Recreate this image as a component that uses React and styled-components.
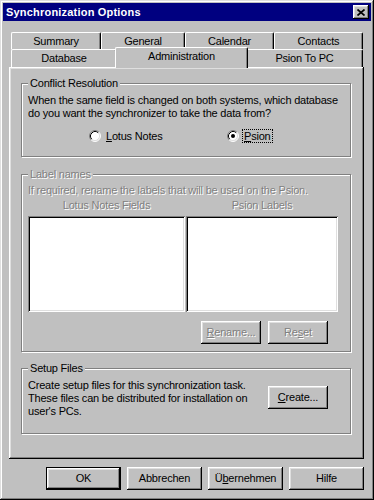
import React from 'react'
import styled, { createGlobalStyle } from 'styled-components'

const GlobalStyle = createGlobalStyle`
  html, body {
    margin: 0;
    padding: 0;
    background: #c0c0c0;
  }
  body {
    font-family: "Liberation Sans", Arial, sans-serif;
    font-size: 11px;
  }
`

const bevel = `
  box-shadow: inset -1px -1px 0 #000, inset 1px 1px 0 #fff,
    inset -2px -2px 0 #808080, inset 2px 2px 0 #dfdfdf;
`

const Window = styled.div`
  box-sizing: border-box;
  width: 374px;
  height: 500px;
  padding: 3px;
  background: #c0c0c0;
  box-shadow: inset -1px -1px 0 #000, inset 1px 1px 0 #dfdfdf,
    inset -2px -2px 0 #808080, inset 2px 2px 0 #fff;
  display: flex;
  flex-direction: column;
  font-family: "Liberation Sans", Arial, sans-serif;
  font-size: 11px;
  line-height: 13px;
  letter-spacing: -0.2px;
  color: #000;
`

const TitleBar = styled.div`
  height: 18px;
  flex: none;
  background: #000080;
  color: #fff;
  font-weight: bold;
  letter-spacing: 0.2px;
  display: flex;
  align-items: center;
  justify-content: space-between;
  padding: 0 2px 0 3px;
`

const CloseButton = styled.button`
  width: 16px;
  height: 14px;
  padding: 0;
  border: 0;
  background: #c0c0c0;
  ${bevel}
  display: flex;
  align-items: center;
  justify-content: center;
`

const Body = styled.div`
  flex: 1;
  display: flex;
  flex-direction: column;
  padding: 11px 7px 7px 6px;
`

const TabStrip = styled.div`
  display: flex;
  flex-direction: column;
  padding: 0 1px 0 2px;
  position: relative;
  z-index: 1;
`

const TabRow = styled.div`
  display: flex;
  height: ${p => p.$height}px;
`

const Tab = styled.div`
  box-sizing: border-box;
  flex: none;
  width: ${p => p.$width}px;
  height: ${p => (p.$active ? p.$height + 3 : p.$height)}px;
  margin: ${p => (p.$active ? '-2px -2px 0' : '0')};
  padding-bottom: ${p => (p.$active ? 3 : 0)}px;
  position: relative;
  z-index: ${p => (p.$active ? 2 : 1)};
  background: #c0c0c0;
  border-top: 1px solid #fff;
  border-left: 1px solid #fff;
  border-right: 1px solid #000;
  border-radius: 2px 2px 0 0;
  box-shadow: inset -1px 0 0 #808080;
  display: flex;
  align-items: center;
  justify-content: center;
`

const Panel = styled.div`
  box-sizing: border-box;
  flex: 1;
  display: flex;
  flex-direction: column;
  padding: 10px 13px 0 12px;
  box-shadow: inset -1px -1px 0 #000, inset 1px 1px 0 #fff,
    inset -2px -2px 0 #808080, inset 2px 2px 0 #dfdfdf;
`

const Group = styled.fieldset`
  margin: ${p => p.$top || 0}px 0 0;
  padding: ${p => p.$padTop}px 6px ${p => p.$padBottom}px;
  border: 1px solid #808080;
  box-shadow: inset 1px 1px 0 #fff, 1px 1px 0 #fff;
  min-width: 0;
`

const Legend = styled.legend`
  padding: 0 2px;
  line-height: 13px;
  background: #c0c0c0;
  color: ${p => (p.$disabled ? '#808080' : '#000')};
  text-shadow: ${p => (p.$disabled ? '1px 1px 0 #fff' : 'none')};
`

const Text = styled.div`
  line-height: 13px;
  white-space: nowrap;
  color: ${p => (p.$disabled ? '#808080' : '#000')};
  text-shadow: ${p => (p.$disabled ? '1px 1px 0 #fff' : 'none')};
`

const RadioRow = styled.div`
  display: flex;
  align-items: center;
  margin-top: 9px;
  padding-left: 61px;
  height: 14px;
`

const RadioOption = styled.label`
  display: flex;
  align-items: center;
  gap: 3px;
  width: ${p => (p.$width ? `${p.$width}px` : 'auto')};
`

const RadioLabel = styled.span`
  line-height: 12px;
  padding: 0 1px;
  border: 1px dotted ${p => (p.$focused ? '#000' : 'transparent')};
`

const LabelArea = styled.div`
  width: 310px;
  display: flex;
  flex-direction: column;
`

const Columns = styled.div`
  display: grid;
  grid-template-columns: 157px 152px;
  column-gap: 1px;
`

const ColumnHead = styled(Text)`
  text-align: center;
  margin-top: 2px;
`

const ListBox = styled.div`
  height: 96px;
  margin-top: 4px;
  background: #fff;
  box-shadow: inset 1px 1px 0 #808080, inset -1px -1px 0 #fff,
    inset 2px 2px 0 #000, inset -2px -2px 0 #dfdfdf;
`

const ActionRow = styled.div`
  display: flex;
  justify-content: flex-end;
  gap: 7px;
  margin-top: 9px;
  padding-right: 10px;
`

const Button = styled.button`
  box-sizing: border-box;
  width: ${p => p.$width || 75}px;
  height: 23px;
  padding: 0;
  font: inherit;
  letter-spacing: inherit;
  background: #c0c0c0;
  color: ${p => (p.disabled ? '#808080' : '#000')};
  text-shadow: ${p => (p.disabled ? '1px 1px 0 #fff' : 'none')};
  border: ${p => (p.$default ? '1px solid #000' : '0')};
  ${bevel}
  flex: none;
`

const SetupRow = styled.div`
  display: flex;
  align-items: flex-start;
  justify-content: space-between;
  padding-right: 16px;
`

const SetupButton = styled(Button)`
  margin-top: 7px;
`

const DialogButtons = styled.div`
  display: flex;
  justify-content: flex-end;
  gap: 6px;
  margin-top: 8px;
  flex: none;
`

const CloseIcon = () => (
  <svg width="8" height="7" viewBox="0 0 8 7">
    <path d="M0.5 0.5 L7.5 6.5 M7.5 0.5 L0.5 6.5" stroke="#000" strokeWidth="1.7" />
  </svg>
)

const RadioIcon = ({ checked }) => (
  <svg width="12" height="12" viewBox="0 0 12 12">
    <circle cx="6" cy="6" r="5" fill="#fff" />
    <path d="M9.89 2.11 A5.5 5.5 0 0 0 2.11 9.89" stroke="#808080" fill="none" />
    <path d="M2.11 9.89 A5.5 5.5 0 0 0 9.89 2.11" stroke="#fff" fill="none" />
    <path d="M9.18 2.82 A4.5 4.5 0 0 0 2.82 9.18" stroke="#000" fill="none" />
    <path d="M2.82 9.18 A4.5 4.5 0 0 0 9.18 2.82" stroke="#dfdfdf" fill="none" />
    {checked && <circle cx="6" cy="6" r="2" fill="#000" />}
  </svg>
)

const backTabs = [
  { label: 'Summary', width: 90 },
  { label: 'General', width: 84 },
  { label: 'Calendar', width: 89 },
  { label: 'Contacts', width: 89 },
]

const frontTabs = [
  { label: 'Database', width: 106 },
  { label: 'Administration', width: 129, active: true },
  { label: 'Psion To PC', width: 117 },
]

const App = () => {
  return (
    <Window>
      <GlobalStyle />
      <TitleBar>
        <span>Synchronization Options</span>
        <CloseButton aria-label="Close">
          <CloseIcon />
        </CloseButton>
      </TitleBar>
      <Body>
        <TabStrip>
          <TabRow $height={17}>
            {backTabs.map(t => (
              <Tab key={t.label} $width={t.width} $height={17}>{t.label}</Tab>
            ))}
          </TabRow>
          <TabRow $height={18}>
            {frontTabs.map(t => (
              <Tab
                key={t.label}
                $width={t.active ? t.width + 4 : t.width}
                $height={18}
                $active={t.active}
              >
                {t.label}
              </Tab>
            ))}
          </TabRow>
        </TabStrip>
        <Panel>
          <Group $padTop={4} $padBottom={13}>
            <Legend>Conflict Resolution</Legend>
            <Text>
              When the same field is changed on both systems, which database
              <br />
              do you want the synchronizer to take the data from?
            </Text>
            <RadioRow>
              <RadioOption $width={138}>
                <RadioIcon />
                <RadioLabel><u>L</u>otus Notes</RadioLabel>
              </RadioOption>
              <RadioOption>
                <RadioIcon checked />
                <RadioLabel $focused><u>P</u>sion</RadioLabel>
              </RadioOption>
            </RadioRow>
          </Group>

          <Group $top={11} $padTop={3} $padBottom={7}>
            <Legend $disabled>Label names</Legend>
            <LabelArea>
              <Text $disabled>If required, rename the labels that will be used on the Psion.</Text>
              <Columns>
                <ColumnHead $disabled>Lotus Notes Fields</ColumnHead>
                <ColumnHead $disabled>Psion Labels</ColumnHead>
                <ListBox />
                <ListBox />
              </Columns>
              <ActionRow>
                <Button $width={60} disabled><u>R</u>ename...</Button>
                <Button $width={60} disabled>Re<u>s</u>et</Button>
              </ActionRow>
            </LabelArea>
          </Group>

          <Group $top={10} $padTop={4} $padBottom={15}>
            <Legend>Setup Files</Legend>
            <SetupRow>
              <Text>
                Create setup files for this synchronization task.
                <br />
                These files can be distributed for installation on
                <br />
                user's PCs.
              </Text>
              <SetupButton $width={60}><u>C</u>reate...</SetupButton>
            </SetupRow>
          </Group>
        </Panel>
        <DialogButtons>
          <Button $default>OK</Button>
          <Button>Abbrechen</Button>
          <Button>Ü<u>b</u>ernehmen</Button>
          <Button>Hilfe</Button>
        </DialogButtons>
      </Body>
    </Window>
  )
}

export default App
